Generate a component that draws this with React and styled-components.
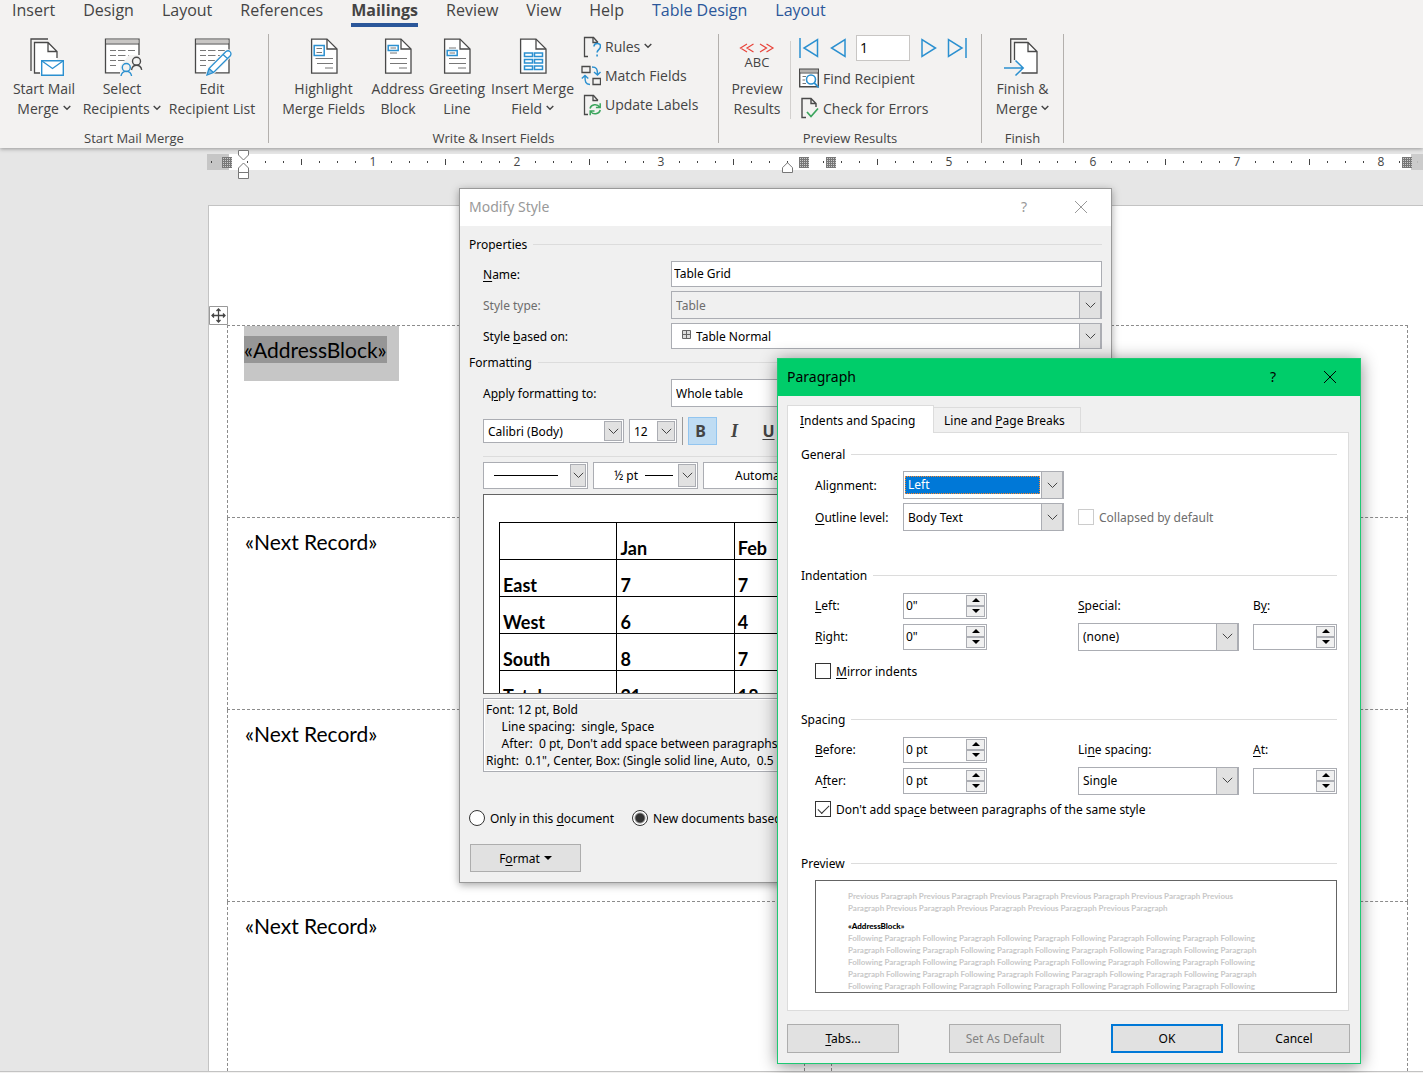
import React from 'react';
import styled, { createGlobalStyle, css } from 'styled-components';

const GlobalStyle = createGlobalStyle`
  * {
    box-sizing: border-box;
  }
  body {
    margin: 0;
    overflow: hidden;
    font-family: 'Open Sans', 'Noto Sans', sans-serif;
    font-size: 12px;
    color: #000;
  }
  button,
  input,
  select {
    font: inherit;
    color: inherit;
    margin: 0;
  }
  u {
    text-underline-offset: 2px;
  }
`;

const Screen = styled.div`
  display: flex;
  flex-direction: column;
  min-height: 100vh;
  background: #e6e6e6;
`;

/* ---------- ribbon ---------- */

const Ribbon = styled.header`
  background: #f3f2f1;
  color: #444;
  box-shadow: 0 1px 4px rgba(0, 0, 0, 0.35);
`;
const TabBar = styled.nav`
  display: flex;
  gap: 28px;
  padding-left: 12px;
`;
const RibbonTab = styled.a`
  font-size: 16px;
  line-height: 20px;
  padding-bottom: 3px;
  border-bottom: 4px solid ${(p) => (p.$active ? '#2b579a' : 'transparent')};
  font-weight: ${(p) => (p.$active ? 700 : 400)};
  color: ${(p) => (p.$context ? '#2b579a' : '#444')};
  text-decoration: none;
  white-space: nowrap;
`;
const Groups = styled.div`
  display: flex;
  height: 121px;
`;
const Group = styled.section`
  display: flex;
  flex-direction: column;
  justify-content: space-between;
  width: ${(p) => p.$width}px;
`;
const GroupBody = styled.div`
  display: flex;
  padding-left: ${(p) => p.$inset || 0}px;
`;
const GroupTitle = styled.div`
  font-size: 13px;
  line-height: 20px;
  text-align: center;
`;
const Separator = styled.div`
  width: 1px;
  margin: 7px 0 5px;
  background: #b3b0ad;
`;
const InnerSeparator = styled.div`
  width: 1px;
  margin: 14px 4px 4px 0;
  background: #d2d0ce;
`;
const BigButton = styled.button`
  display: flex;
  flex-direction: column;
  align-items: center;
  gap: 3px;
  width: ${(p) => p.$width}px;
  padding: 9px 0 0;
  border: 0;
  background: none;
  font-size: 14px;
  line-height: 20px;
  white-space: nowrap;
`;
const Stack = styled.div`
  display: flex;
  flex-direction: column;
  padding: 5px 0 0 4px;
`;
const SmallButton = styled.button`
  display: flex;
  align-items: center;
  gap: 4px;
  height: ${(p) => p.$height || 29}px;
  padding: 0;
  border: 0;
  background: none;
  font-size: 14px;
  white-space: nowrap;
`;
const NavRow = styled.div`
  display: flex;
  align-items: center;
  justify-content: space-between;
  width: 168px;
  height: 31px;
`;
const NavButton = styled.button`
  display: flex;
  padding: 0;
  border: 0;
  background: none;
`;
const RecordInput = styled.input`
  width: 54px;
  height: 26px;
  padding: 0 3px;
  border: 1px solid #c8c6c4;
  background: #fff;
  color: #000;
  font-size: 14px;
`;

/* ---------- document ---------- */

const RulerBar = styled.div`
  position: relative;
  display: flex;
  height: 16px;
  margin: 6px 0 35px 207px;
  background: linear-gradient(to right, #c6c6c6 22px, #fff 22px);
`;
const RulerSlots = styled.div`
  display: flex;
  flex: 1;
  margin-left: -5px;
  overflow: hidden;
`;
const Slot = styled.div`
  display: flex;
  flex: none;
  align-items: center;
  justify-content: center;
  width: 18px;
  font-size: 12px;
  line-height: 18px;
  color: #444;
`;
const Tick = styled.i`
  width: 1px;
  height: ${(p) => (p.$tall ? 6 : 2)}px;
  background: #444;
`;
const RulerMark = styled.svg`
  position: absolute;
  left: ${(p) => p.$x}px;
  top: ${(p) => p.$y}px;
`;
const RulerEnd = styled.div`
  position: absolute;
  left: 1204px;
  right: 0;
  height: 16px;
  background: #c6c6c6;
  opacity: 0.9;
`;
const Sheet = styled.main`
  position: relative;
  flex: 1;
  margin-left: 208px;
  padding: 119px 15px 0 18px;
  border: 1px solid #c3c3c3;
  border-width: 1px 0 0 1px;
  background: #fff;
`;
const WindowEdge = styled.div`
  height: 2px;
  border-top: 1px solid #c3c3c3;
  background: #f3f2f1;
`;
const Labels = styled.table`
  width: 100%;
  table-layout: fixed;
  border-collapse: collapse;
  font-family: Lato, 'Open Sans', sans-serif;
  font-size: 21px;
  line-height: 27px;
  td {
    height: 192px;
    padding: 0;
    border: 1px dashed #8c8c8c;
    vertical-align: top;
  }
  tr:last-child td {
    height: 169px;
    border-bottom: 0;
  }
`;
const MergeField = styled.div`
  padding: 10px 0 0 17px;
`;
const SelectedField = styled.div`
  width: 155px;
  height: 55px;
  margin-left: 16px;
  padding-top: 10px;
  background: #c6c6c6;
  span {
    display: inline-block;
    background: #969696;
  }
`;
const MoveHandle = styled.button`
  position: absolute;
  left: 0;
  top: 100px;
  display: flex;
  padding: 0;
  border: 0;
  background: none;
`;

/* ---------- windows ---------- */

const Window = styled.section`
  position: absolute;
  left: ${(p) => p.$x}px;
  top: ${(p) => p.$y}px;
  width: ${(p) => p.$width}px;
  border: 1px solid ${(p) => (p.$active ? '#1dc973' : '#999')};
  background: #f0f0f0;
  font-family: 'Noto Sans', 'Open Sans', sans-serif;
  box-shadow: ${(p) =>
    p.$active
      ? '0 2px 16px rgba(0, 0, 0, 0.45)'
      : '0 2px 8px rgba(0, 0, 0, 0.35)'};
`;
const TitleBar = styled.header`
  display: flex;
  align-items: center;
  height: 37px;
  padding: 0 22px 2px 9px;
  background: ${(p) => (p.$active ? '#00cd6a' : '#fff')};
  color: ${(p) => (p.$active ? '#000' : '#999')};
  font-size: 14px;
  h2 {
    flex: 1;
    margin: 0;
    font-size: inherit;
    font-weight: 400;
  }
`;
const TitleButton = styled.button`
  display: flex;
  align-items: center;
  justify-content: center;
  width: 16px;
  height: 24px;
  margin-left: 41px;
  padding: 0;
  border: 0;
  background: none;
`;
const Caption = styled.h3`
  display: flex;
  align-items: center;
  gap: 6px;
  height: 18px;
  margin: ${(p) => p.$top || 0}px 0 0;
  font-size: 12px;
  font-weight: 400;
  &::after {
    content: '';
    flex: 1;
    height: 1px;
    background: #dcdcdc;
  }
`;
const Combo = styled.div`
  display: flex;
  align-items: center;
  width: ${(p) => (p.$width ? `${p.$width}px` : '100%')};
  height: ${(p) => p.$height || 28}px;
  border: 1px solid #abadb3;
  background: ${(p) => (p.$disabled ? '#f0f0f0' : '#fff')};
  color: ${(p) => (p.$disabled ? '#6d6d6d' : '#000')};
  svg {
    flex: none;
  }
`;
const ComboSelect = styled.select`
  flex: 1;
  min-width: 0;
  height: 19px;
  margin: 0 1px;
  padding: 0 0 0 ${(p) => (p.$inset === undefined ? 3 : p.$inset)}px;
  border: 0;
  outline: 0;
  appearance: none;
  background: none;
  opacity: 1;
  line-height: 19px;
  ${(p) =>
    p.$focused &&
    css`
      height: 18px;
      line-height: 16px;
      padding-left: 2px;
      border: 1px dotted #ff8728;
      background: #0078d7;
      color: #fff;
    `}
`;
const ArrowCell = styled.span`
  display: flex;
  align-items: center;
  justify-content: center;
  align-self: stretch;
  width: ${(p) => (p.$small ? 18 : 22)}px;
  margin: ${(p) => (p.$small ? '1px 1px 1px 0' : '0')};
  border: 1px solid #abadb3;
  border-width: ${(p) => (p.$small ? '1px' : '0 1px 0 1px')};
  background: #e1e1e1;
  pointer-events: none;
`;
const PushButton = styled.button`
  width: 112px;
  height: 29px;
  padding: 0;
  border: ${(p) => (p.$primary ? '2px solid #0078d7' : '1px solid #adadad')};
  background: #e1e1e1;
  &:disabled {
    color: #838383;
  }
`;

/* modify style */

const StyleBody = styled.div`
  padding: 9px 9px 10px;
`;
const FieldRow = styled.div`
  display: grid;
  grid-template-columns: 188px 1fr;
  align-items: center;
  margin: ${(p) => p.$top || 4}px 0 0 14px;
  color: ${(p) => (p.$disabled ? '#6d6d6d' : '#000')};
`;
const NameInput = styled.input`
  width: 100%;
  height: 26px;
  padding: 0 2px 2px;
  border: 1px solid #abadb3;
  background: #fff;
`;
const ToolRow = styled.div`
  display: flex;
  align-items: center;
  gap: 5px;
  margin: ${(p) => p.$top}px 0 0 14px;
`;
const ToolSeparator = styled.div`
  width: 1px;
  height: 28px;
  background: #999;
`;
const FormatToggle = styled.button`
  width: 29px;
  height: 28px;
  padding: 0 4px 0 0;
  border: 1px solid ${(p) => (p.$on ? '#92c5f0' : 'transparent')};
  background: ${(p) => (p.$on ? '#bfdcf3' : 'none')};
  color: #444;
  font-size: 16px;
  font-weight: 700;
  i {
    font-family: 'Liberation Serif', serif;
    font-size: 18px;
  }
`;
const Rule = styled.div`
  height: 1px;
  margin: 11px 0 0 14px;
  background: #dcdcdc;
`;
const StrokeLine = styled.span`
  flex: none;
  width: ${(p) => p.$width}px;
  height: 1px;
  margin: 0 ${(p) => p.$gap}px;
  background: #000;
`;
const SampleBox = styled.div`
  height: 200px;
  margin: 5px 0 0 14px;
  padding: 27px 15px 0;
  border: 1px solid #646464;
  background: #fff;
  overflow: hidden;
`;
const SampleTable = styled.table`
  table-layout: fixed;
  width: 588px;
  border-collapse: collapse;
  font-family: Lato, 'Open Sans', sans-serif;
  font-size: 18px;
  line-height: 20px;
  th,
  td {
    height: 37px;
    padding: 0 3px 1px;
    border: 1px solid #000;
    font-weight: 700;
    text-align: left;
    vertical-align: bottom;
  }
`;
const Description = styled.div`
  height: 74px;
  margin: 4px 0 0 14px;
  padding: 2px;
  border: 1px solid #abadb3;
  box-shadow: inset 0 0 0 1px #fff;
  line-height: 17px;
  white-space: pre;
  overflow: hidden;
  p {
    margin: 0;
  }
`;
const RadioRow = styled.div`
  display: flex;
  gap: 18px;
  margin-top: 37px;
`;
const RadioLabel = styled.label`
  display: flex;
  align-items: center;
  gap: 5px;
  height: 18px;
`;
const Radio = styled.input`
  width: 16px;
  height: 16px;
  border: 1px solid #333;
  border-radius: 50%;
  appearance: none;
  background: #fff;
  &:checked {
    background: radial-gradient(circle, #333 4px, #fff 6px);
  }
`;
const FormatButton = styled(PushButton)`
  display: flex;
  align-items: center;
  justify-content: center;
  gap: 4px;
  width: 111px;
  height: 28px;
  margin: 17px 0 0 1px;
`;

/* paragraph */

const ParagraphBody = styled.div`
  padding: 9px 10px 10px 9px;
`;
const PageTabs = styled.div`
  display: flex;
  align-items: flex-end;
  height: 28px;
  margin-bottom: -1px;
`;
const PageTab = styled.button`
  position: relative;
  width: 147px;
  height: ${(p) => (p.$active ? 28 : 26)}px;
  padding: 1px 0 0 ${(p) => (p.$active ? 12 : 10)}px;
  border: 1px solid #dcdcdc;
  border-width: ${(p) => (p.$active ? '1px 1px 0' : '1px 1px 1px 0')};
  background: ${(p) => (p.$active ? '#fff' : '#f0f0f0')};
  text-align: left;
`;
const Panel = styled.div`
  margin-right: 1px;
  padding: 12px 11px 17px 13px;
  border: 1px solid #dcdcdc;
  background: #fff;
`;
const Fields = styled.div`
  display: grid;
  grid-template-columns: 88px 175px 175px 84px;
  grid-auto-rows: ${(p) => p.$row}px;
  align-items: center;
  margin: 6px 0 0 14px;
`;
const CheckLabel = styled.label`
  display: flex;
  align-items: center;
  gap: 5px;
  height: 18px;
  margin: ${(p) => p.$margin || '0'};
  color: ${(p) => (p.$disabled ? '#6d6d6d' : '#000')};
  white-space: nowrap;
`;
const Check = styled.input`
  display: grid;
  place-content: center;
  width: 16px;
  height: 16px;
  border: 1px solid ${(p) => (p.disabled ? '#ccc' : '#333')};
  appearance: none;
  background: #fff;
  &:checked::before {
    content: '';
    width: 10px;
    height: 5px;
    margin-top: -3px;
    border: solid #333;
    border-width: 0 0 1px 1px;
    transform: rotate(-45deg);
  }
`;
const SpinBox = styled.div`
  display: flex;
  width: 84px;
  height: 26px;
  padding: 1px;
  border: 1px solid #abadb3;
  background: #fff;
  input {
    flex: 1;
    min-width: 0;
    padding: 0 0 1px 1px;
    border: 0;
    background: none;
  }
`;
const SpinButtons = styled.div`
  display: flex;
  flex-direction: column;
  width: 19px;
  button {
    display: flex;
    flex: 1;
    align-items: center;
    justify-content: center;
    padding: 0;
    border: 1px solid #abadb3;
    background: #f0f0f0;
  }
`;
const TextPreview = styled.div`
  height: 113px;
  margin: 8px 0 0 14px;
  padding: 9px 32px 0;
  border: 1px solid #646464;
  font-family: Lato, 'Open Sans', sans-serif;
  font-size: 8px;
  font-weight: 700;
  line-height: 12px;
  color: #c8c8c8;
  white-space: pre;
  overflow: hidden;
  p {
    margin: 0;
  }
  strong {
    display: block;
    margin-top: 7px;
    line-height: 11px;
    color: #000;
  }
`;
const Footer = styled.footer`
  display: flex;
  justify-content: space-between;
  margin-top: 13px;
`;
const FooterPair = styled.div`
  display: flex;
  gap: ${(p) => p.$gap}px;
`;

/* ---------- icons ---------- */

const DARK = '#494949';
const BLUE = '#2b90d0';

const Icon = ({ children, w = 44, h = 40 }) => (
  <svg width={w} height={h} viewBox={`0 0 ${w} ${h}`} fill="none" stroke={DARK}>
    {children}
  </svg>
);
const Caret = () => (
  <svg width="8" height="10" viewBox="0 0 8 10" fill="none" stroke="#444" strokeWidth="1.4">
    <path d="M.7 2 4 5.3 7.3 2" />
  </svg>
);
const Chevron = () => (
  <svg width="11" height="7" viewBox="0 0 11 7" fill="none" stroke="#444">
    <path d="M.8.8 5.5 5.5 10.2.8" />
  </svg>
);
const Page = ({ children }) => (
  <Icon>
    <path d="M9.600 3.100H25l10 10v24H9.600z" fill="#fff" strokeWidth="1.3" />
    <path d="M25 3v10h10" strokeWidth="1.3" />
    {children}
  </Icon>
);
const MailIcon = () => (
  <Icon>
    <path d="M9 35V3h17" strokeWidth="1.3" />
    <path d="M18 37h-5.500V6.500H26l9 9V37z" fill="#fff" stroke="none" />
    <path d="M18 37h-5.500V6.500H26l9 9V22M26 6.500v9h9" strokeWidth="1.3" />
    <path d="M19.700 24.700h21.600v14.500H19.700z" fill="#fff" stroke={BLUE} strokeWidth="1.4" />
    <path d="m20 25 10.500 7.500L41 25" stroke={BLUE} strokeWidth="1.3" />
  </Icon>
);
const ListWindow = ({ children }) => (
  <Icon>
    <path d="M5.500 3.200h33.500v33.600H5.500z" fill="#fff" strokeWidth="1.3" />
    <path d="M6 3.600h32.500v4H6z" fill="#c8c6c4" stroke="none" />
    <path d="M5.500 8h33.500" />
    <path
      d="M10 14.500h6M18 14.500h7.500M28 14.500h7M10 19.500h6M18 19.500h7.500M28 19.500h7M10 24.500h6M18 24.500h7.500M10 29.500h6"
      stroke="#777"
    />
    {children}
  </Icon>
);
const RecipientsIcon = () => (
  <ListWindow>
    <path d="M20 40V30l9-11h15v21z" fill="#f3f2f1" stroke="none" />
    <circle cx="36.500" cy="25.300" r="4" strokeWidth="1.4" />
    <path d="M31.500 34c.6-3 2.500-4.700 5-4.700s4.600 1.700 5.200 4.500" strokeWidth="1.4" />
    <circle cx="26.300" cy="31.500" r="4" fill="#f3f2f1" stroke={BLUE} strokeWidth="1.4" />
    <path d="M21 40c.5-3 2.500-4.600 5.300-4.600s4.800 1.600 5.300 4.600" stroke={BLUE} strokeWidth="1.4" />
  </ListWindow>
);
const EditListIcon = () => (
  <ListWindow>
    <path
      d="m17 39 2-6.500 17-17c3-2 6 1 4.500 4L23.500 36.500z"
      fill="#fff"
      stroke="#f3f2f1"
      strokeWidth="3"
    />
    <path
      d="m17 39 2-6.500 17-17c3-2 6 1 4.500 4L23.500 36.500zM33 18.500l4.500 4M19 32.500l4.500 4"
      fill="#fff"
      stroke={BLUE}
      strokeWidth="1.3"
    />
    <path d="m17 39 2-6.500 4.500 4z" fill={BLUE} stroke="none" fillOpacity=".6" />
  </ListWindow>
);
const HighlightIcon = () => (
  <Page>
    <path d="M13.500 22.500h17.500M15 27.500h16M23 32h8" stroke="#777" />
    <path d="M12.200 9.500h10v10h-10z" stroke={BLUE} strokeWidth="1.5" />
    <path d="M14.500 12.500H20M14.500 16.500H20" stroke="#777" />
  </Page>
);
const AddressIcon = () => (
  <Page>
    <path d="M14 17h7M14 22.500h17M14 27.500h17M23 32h8" stroke="#777" />
    <path d="M12.200 9.500h10v5h-10z" stroke={BLUE} strokeWidth="1.5" />
    <path d="M14.500 12H20" stroke="#777" />
  </Page>
);
const GreetingIcon = () => (
  <Page>
    <path d="M14 12h7M14 22.500h17M14 27.500h17M23 32h8" stroke="#777" />
    <path d="M12.200 14.500h10v5h-10z" stroke={BLUE} strokeWidth="1.5" />
    <path d="M14.500 17H20" stroke="#777" />
  </Page>
);
const InsertFieldIcon = () => (
  <Page>
    <path
      d="M13.500 17h8v3.500h-8zM23.500 17h8v3.500h-8zM13.500 23.500h8V27h-8zM23.500 23.500h8V27h-8zM13.500 30h8v3.500h-8zM23.500 30h8v3.500h-8z"
      stroke={BLUE}
      strokeWidth="1.5"
    />
  </Page>
);
const PreviewIcon = () => (
  <svg width="44" height="40" viewBox="0 0 44 40">
    <path
      d="m12 8-6.500 4L12 16m6.500-8L12 12l6.500 4M25 8l6.500 4-6.500 4m6.500-8 6.500 4-6.500 4"
      fill="none"
      stroke="#e8453c"
      strokeWidth="1.2"
    />
    <text x="22" y="31" textAnchor="middle" fontSize="13" fill="#444">
      ABC
    </text>
  </svg>
);
const FinishIcon = () => (
  <Icon>
    <path d="M9.700 27V3H26" strokeWidth="1.3" />
    <path d="M13.500 24V6.500H27l9 9V37H20.500V28z" fill="#fff" stroke="none" />
    <path d="M13.500 24V6.500H27l9 9V37H20.500M27 6.500v9h9" strokeWidth="1.3" />
    <path d="M3 32h19M14.500 24.500l7.700 7.500-7.700 7.500" stroke={BLUE} strokeWidth="1.5" />
  </Icon>
);
const SmallPage = ({ children }) => (
  <svg width="20" height="22" viewBox="-1 0 20 22" fill="none" stroke={DARK}>
    <path d="M6 20.500H2.500V1.500h9L16 6.500" strokeWidth="1.3" />
    <path d="M11 1.500V6.500h5" strokeWidth="1.3" />
    {children}
  </svg>
);
const RulesIcon = () => (
  <SmallPage>
    <path
      d="M12 10.500c0-4 6.500-4 6.500-.3s-3.400 3-3.400 6.300M15.100 18.500v2"
      stroke={BLUE}
      strokeWidth="1.6"
    />
  </SmallPage>
);
const MatchIcon = () => (
  <Icon w={20} h={22}>
    <path d="M1 1.500h8v6H1zM12 13.500h7.500v6H12z" strokeWidth="1.3" />
    <path d="M11 2c4.500 0 5.500 2 5.500 7.500M13 7l3.500 3L19.500 7" stroke={BLUE} strokeWidth="1.4" />
    <path d="M9 19.500c-4.500-.5-5-2.500-5-8M.8 13.500 4 10.500l3.300 3" stroke={BLUE} strokeWidth="1.4" />
  </Icon>
);
const UpdateIcon = () => (
  <SmallPage>
    <path
      d="M8 14.500c1.200-4.500 7.500-5 9.500-1.500M18.200 9.200v4.300h-4.300M18.300 16c-1.200 4.500-7.500 5-9.500 1.500M8.200 21.300v-4.300h4.300"
      stroke="#3ba55d"
      strokeWidth="1.5"
    />
  </SmallPage>
);
const FindIcon = () => (
  <Icon w={20} h={20}>
    <path d="M.7 1.200h18.600v17.600H.7z" fill="#fff" strokeWidth="1.4" />
    <path d="M1 1.500h18v3H1z" fill="#b5b3b1" stroke="none" />
    <path d="M1 5h18" />
    <path d="M3.500 8.500H7M3.500 12H6M3.500 15.500H7" stroke="#777" />
    <circle cx="12" cy="11.500" r="4.500" fill="#fff" stroke={BLUE} strokeWidth="1.6" />
    <path d="m15.200 14.800 4.500 4.700" stroke={BLUE} strokeWidth="1.7" />
  </Icon>
);
const CheckIcon = () => (
  <Icon w={20} h={22}>
    <path d="M7 20.500H3v-19h9l5 5V10M12 1.500v5h5" strokeWidth="1.4" />
    <path d="m8 15 4 4.500 7-8" stroke="#3ba55d" strokeWidth="1.7" />
  </Icon>
);
const NavArrow = ({ d, w }) => (
  <svg width={w} height="20" viewBox={`0 0 ${w} 20`} fill="none" stroke={BLUE} strokeWidth="1.5">
    <path d={d} />
  </svg>
);
const Close = () => (
  <svg width="14" height="14" viewBox="0 0 14 14" fill="none" stroke="currentColor">
    <path d="m1 1 12 12M13 1 1 13" />
  </svg>
);
const Triangle = ({ up }) => (
  <svg width="8" height="4" viewBox="0 0 8 4">
    <path d={up ? 'M4 0 8 4H0z' : 'M4 4 0 0h8z'} />
  </svg>
);
const GridMark = ({ x }) => (
  <RulerMark $x={x} $y={3} width="10" height="11" viewBox="0 0 10 11" stroke="#777">
    <path fill="#ccc" stroke="none" d="M0 0h10v11H0z" />
    <path d="M.5 0v11M2.500 0v11M4.500 0v11M6.500 0v11M8.500 0v11M0 .5h10M0 2.500h10M0 4.500h10M0 6.500h10M0 8.500h10M0 10.500h10" />
  </RulerMark>
);

/* ---------- parts ---------- */

const tabs = [
  'Insert',
  'Design',
  'Layout',
  'References',
  'Mailings',
  'Review',
  'View',
  'Help',
];
const rulerSlots = Array.from({ length: 69 }, (_, i) => i - 1);

// the gutter between the label columns hides the number at inch 4
function RulerSlot({ n }) {
  if (n > 0 && n % 8 === 0) {
    return <Slot>{n === 32 ? '' : n / 8}</Slot>;
  }
  return <Slot>{n !== 0 && <Tick $tall={n % 8 === 4} />}</Slot>;
}

function Dropdown({ id, label, value, width, height, disabled, focused, small, inset, lead, tail }) {
  return (
    <Combo $width={width} $height={height} $disabled={disabled}>
      {lead}
      <ComboSelect
        id={id}
        aria-label={label}
        disabled={disabled}
        $focused={focused}
        $inset={inset}
      >
        <option>{value}</option>
      </ComboSelect>
      {tail}
      <ArrowCell $small={small}>
        <Chevron />
      </ArrowCell>
    </Combo>
  );
}

function Spinner({ id, value }) {
  return (
    <SpinBox>
      <input id={id} type="text" defaultValue={value} />
      <SpinButtons>
        <button type="button" aria-label="Increase">
          <Triangle up />
        </button>
        <button type="button" aria-label="Decrease">
          <Triangle />
        </button>
      </SpinButtons>
    </SpinBox>
  );
}

function MailingsRibbon() {
  return (
    <Ribbon>
      <TabBar>
        {tabs.map((tab) => (
          <RibbonTab key={tab} href="#" $active={tab === 'Mailings'}>
            {tab}
          </RibbonTab>
        ))}
        <RibbonTab href="#" $context>
          Table Design
        </RibbonTab>
        <RibbonTab href="#" $context>
          Layout
        </RibbonTab>
      </TabBar>
      <Groups>
        <Group $width={268}>
          <GroupBody $inset={8}>
            <BigButton $width={72}>
              <MailIcon />
              <span>
                Start Mail
                <br />
                Merge <Caret />
              </span>
            </BigButton>
            <BigButton $width={84}>
              <RecipientsIcon />
              <span>
                Select
                <br />
                Recipients <Caret />
              </span>
            </BigButton>
            <BigButton $width={96}>
              <EditListIcon />
              <span>
                Edit
                <br />
                Recipient List
              </span>
            </BigButton>
          </GroupBody>
          <GroupTitle>Start Mail Merge</GroupTitle>
        </Group>
        <Separator />
        <Group $width={449}>
          <GroupBody $inset={8}>
            <BigButton $width={93}>
              <HighlightIcon />
              <span>
                Highlight
                <br />
                Merge Fields
              </span>
            </BigButton>
            <BigButton $width={56}>
              <AddressIcon />
              <span>
                Address
                <br />
                Block
              </span>
            </BigButton>
            <BigButton $width={62}>
              <GreetingIcon />
              <span>
                Greeting
                <br />
                Line
              </span>
            </BigButton>
            <BigButton $width={89}>
              <InsertFieldIcon />
              <span>
                Insert Merge
                <br />
                Field <Caret />
              </span>
            </BigButton>
            <Stack>
              <SmallButton>
                <RulesIcon />
                <span>
                  Rules <Caret />
                </span>
              </SmallButton>
              <SmallButton>
                <MatchIcon />
                Match Fields
              </SmallButton>
              <SmallButton>
                <UpdateIcon />
                Update Labels
              </SmallButton>
            </Stack>
          </GroupBody>
          <GroupTitle>Write &amp; Insert Fields</GroupTitle>
        </Group>
        <Separator />
        <Group $width={262}>
          <GroupBody $inset={5}>
            <BigButton $width={66}>
              <PreviewIcon />
              <span>
                Preview
                <br />
                Results
              </span>
            </BigButton>
            <InnerSeparator />
            <Stack>
              <NavRow>
                <NavButton aria-label="First record">
                  <NavArrow w={20} d="M1 0v20M18.500 1.500v17L5 10z" />
                </NavButton>
                <NavButton aria-label="Previous record">
                  <NavArrow w={16} d="M15 1.500v17L1.500 10z" />
                </NavButton>
                <RecordInput aria-label="Record" defaultValue="1" />
                <NavButton aria-label="Next record">
                  <NavArrow w={16} d="M1 1.500v17L14.500 10z" />
                </NavButton>
                <NavButton aria-label="Last record">
                  <NavArrow w={20} d="M19 0v20M1.500 1.500v17L15 10z" />
                </NavButton>
              </NavRow>
              <SmallButton $height={30}>
                <FindIcon />
                Find Recipient
              </SmallButton>
              <SmallButton $height={30}>
                <CheckIcon />
                Check for Errors
              </SmallButton>
            </Stack>
          </GroupBody>
          <GroupTitle>Preview Results</GroupTitle>
        </Group>
        <Separator />
        <Group $width={81}>
          <GroupBody>
            <BigButton $width={81}>
              <FinishIcon />
              <span>
                Finish &amp;
                <br />
                Merge <Caret />
              </span>
            </BigButton>
          </GroupBody>
          <GroupTitle>Finish</GroupTitle>
        </Group>
        <Separator />
      </Groups>
    </Ribbon>
  );
}

function Ruler() {
  return (
    <RulerBar>
      <RulerSlots>
        {rulerSlots.map((n) => (
          <RulerSlot key={n} n={n} />
        ))}
      </RulerSlots>
      <RulerEnd />
      <GridMark x={15} />
      <GridMark x={592} />
      <GridMark x={619} />
      <GridMark x={1195} />
      <RulerMark $x={31} $y={-4} width="11" height="30" viewBox="0 0 11 30" fill="#fff" stroke="#777">
        <path d="M.5.5h10V5l-5 5-5-5zM5.500 13l5 5v4.500H.5V18zM.5 22.500h10v6H.5z" />
      </RulerMark>
      <RulerMark $x={575} $y={8} width="11" height="11" viewBox="0 0 11 11" fill="#fff" stroke="#777">
        <path d="m5.500.7 5 5v4.800H.5V5.700z" />
      </RulerMark>
    </RulerBar>
  );
}

function LabelSheet() {
  return (
    <Sheet>
      <MoveHandle aria-label="Move table">
        <svg width="19" height="19" viewBox="0 0 19 19" fill="#fff" stroke="#999">
          <path d="M.5.5h18v18H.5z" />
          <path
            d="M9.500 3v13M3 9.500h13M7.500 5l2-2 2 2M7.500 14l2 2 2-2M5 7.500l-2 2 2 2M14 7.500l2 2-2 2"
            fill="none"
            stroke="#444"
            strokeWidth="1.3"
          />
        </svg>
      </MoveHandle>
      <Labels>
        <colgroup>
          <col width="577" />
          <col width="27" />
          <col />
        </colgroup>
        <tbody>
          <tr>
            <td>
              <SelectedField>
                <span>«AddressBlock»</span>
              </SelectedField>
            </td>
            <td />
            <td />
          </tr>
          {[1, 2, 3].map((row) => (
            <tr key={row}>
              <td>
                <MergeField>«Next Record»</MergeField>
              </td>
              <td />
              <td />
            </tr>
          ))}
        </tbody>
      </Labels>
    </Sheet>
  );
}

const sampleRows = [
  ['East', 7, 7, 5, 19],
  ['West', 6, 4, 7, 17],
  ['South', 8, 7, 9, 24],
  ['Total', 21, 18, 21, 60],
];

function ModifyStyle() {
  return (
    <Window $x={459} $y={188} $width={653}>
      <TitleBar>
        <h2>Modify Style</h2>
        <TitleButton aria-label="Help">?</TitleButton>
        <TitleButton aria-label="Close">
          <Close />
        </TitleButton>
      </TitleBar>
      <StyleBody>
        <Caption>Properties</Caption>
        <FieldRow $top={8}>
          <label htmlFor="style-name">
            <u>N</u>ame:
          </label>
          <NameInput id="style-name" defaultValue="Table Grid" />
        </FieldRow>
        <FieldRow $disabled>
          <label htmlFor="style-type">Style type:</label>
          <Dropdown id="style-type" value="Table" disabled />
        </FieldRow>
        <FieldRow>
          <label htmlFor="style-base">
            Style <u>b</u>ased on:
          </label>
          <Dropdown
            id="style-base"
            value="Table Normal"
            height={26}
            lead={
              <svg width="20" height="12" viewBox="0 0 20 12" fill="#ddd" stroke="#666">
                <path d="M10.500.5h8v8h-8zM14.500.5v8M10.500 4.500h8" />
              </svg>
            }
          />
        </FieldRow>
        <Caption $top={4}>Formatting</Caption>
        <FieldRow $top={8}>
          <label htmlFor="apply-to">
            A<u>p</u>ply formatting to:
          </label>
          <Dropdown id="apply-to" value="Whole table" />
        </FieldRow>
        <ToolRow $top={10}>
          <Dropdown label="Font" value="Calibri (Body)" width={141} height={24} small />
          <Dropdown label="Font size" value="12" width={48} height={24} small />
          <ToolSeparator />
          <FormatToggle aria-label="Bold" $on>
            B
          </FormatToggle>
          <FormatToggle aria-label="Italic">
            <i>I</i>
          </FormatToggle>
          <FormatToggle aria-label="Underline">
            <u>U</u>
          </FormatToggle>
        </ToolRow>
        <Rule />
        <ToolRow $top={5}>
          <Dropdown
            label="Line style"
            value=""
            width={105}
            height={27}
            small
            inset={0}
            lead={<StrokeLine $width={64} $gap={10} />}
          />
          <Dropdown
            label="Line weight"
            value="½ pt"
            width={105}
            height={27}
            small
            inset={19}
            tail={<StrokeLine $width={28} $gap={5} />}
          />
          <Dropdown label="Line color" value="Automatic" width={140} height={27} small inset={30} />
        </ToolRow>
        <SampleBox>
          <SampleTable>
            <thead>
              <tr>
                <th />
                <th>Jan</th>
                <th>Feb</th>
                <th>Mar</th>
                <th>Total</th>
              </tr>
            </thead>
            <tbody>
              {sampleRows.map((row) => (
                <tr key={row[0]}>
                  {row.map((cell, i) => (
                    <td key={i}>{cell}</td>
                  ))}
                </tr>
              ))}
            </tbody>
          </SampleTable>
        </SampleBox>
        <Description>
          <p>Font: 12 pt, Bold</p>
          <p>{'     Line spacing:  single, Space'}</p>
          <p>{"     After:  0 pt, Don't add space between paragraphs"}</p>
          <p>{'Right:  0.1", Center, Box: (Single solid line, Auto,  0.5 pt'}</p>
        </Description>
        <RadioRow>
          <RadioLabel>
            <Radio type="radio" name="scope" />
            <span>
              Only in this <u>d</u>ocument
            </span>
          </RadioLabel>
          <RadioLabel>
            <Radio type="radio" name="scope" defaultChecked />
            New documents based on this template
          </RadioLabel>
        </RadioRow>
        <FormatButton>
          <span>
            F<u>o</u>rmat
          </span>
          <Triangle />
        </FormatButton>
      </StyleBody>
    </Window>
  );
}

const previous = [
  'Previous Paragraph Previous Paragraph Previous Paragraph Previous Paragraph Previous Paragraph Previous',
  'Paragraph Previous Paragraph Previous Paragraph Previous Paragraph Previous Paragraph',
];
const followingA =
  'Following Paragraph Following Paragraph Following Paragraph Following Paragraph Following Paragraph Following';
const followingB =
  'Paragraph Following Paragraph Following Paragraph Following Paragraph Following Paragraph Following Paragraph';

function ParagraphDialog() {
  return (
    <Window $x={777} $y={358} $width={584} $active>
      <TitleBar $active>
        <h2>Paragraph</h2>
        <TitleButton aria-label="Help">?</TitleButton>
        <TitleButton aria-label="Close">
          <Close />
        </TitleButton>
      </TitleBar>
      <ParagraphBody>
        <PageTabs>
          <PageTab $active>
            <u>I</u>ndents and Spacing
          </PageTab>
          <PageTab>
            Line and <u>P</u>age Breaks
          </PageTab>
        </PageTabs>
        <Panel>
          <Caption>General</Caption>
          <Fields $row={32}>
            <label htmlFor="alignment">
              Ali<u>g</u>nment:
            </label>
            <Dropdown id="alignment" value="Left" width={161} focused />
            <span />
            <span />
            <label htmlFor="outline">
              <u>O</u>utline level:
            </label>
            <Dropdown id="outline" value="Body Text" width={161} />
            <CheckLabel $disabled>
              <Check type="checkbox" disabled />
              Collapsed by default
            </CheckLabel>
          </Fields>
          <Caption $top={33}>Indentation</Caption>
          <Fields $row={31}>
            <label htmlFor="indent-left">
              <u>L</u>eft:
            </label>
            <Spinner id="indent-left" value={'0"'} />
            <label htmlFor="special">
              <u>S</u>pecial:
            </label>
            <label htmlFor="indent-by">
              B<u>y</u>:
            </label>
            <label htmlFor="indent-right">
              <u>R</u>ight:
            </label>
            <Spinner id="indent-right" value={'0"'} />
            <Dropdown id="special" value="(none)" width={161} />
            <Spinner id="indent-by" value="" />
          </Fields>
          <CheckLabel $margin="10px 0 0 14px">
            <Check type="checkbox" />
            <span>
              <u>M</u>irror indents
            </span>
          </CheckLabel>
          <Caption $top={30}>Spacing</Caption>
          <Fields $row={31}>
            <label htmlFor="before">
              <u>B</u>efore:
            </label>
            <Spinner id="before" value="0 pt" />
            <label htmlFor="line-spacing">
              Li<u>n</u>e spacing:
            </label>
            <label htmlFor="spacing-at">
              <u>A</u>t:
            </label>
            <label htmlFor="after">
              A<u>f</u>ter:
            </label>
            <Spinner id="after" value="0 pt" />
            <Dropdown id="line-spacing" value="Single" width={161} />
            <Spinner id="spacing-at" value="" />
          </Fields>
          <CheckLabel $margin="4px 0 0 14px">
            <Check type="checkbox" defaultChecked />
            <span>
              Don't add spa<u>c</u>e between paragraphs of the same style
            </span>
          </CheckLabel>
          <Caption $top={36}>Preview</Caption>
          <TextPreview>
            {previous.map((line) => (
              <p key={line}>{line}</p>
            ))}
            <strong>«AddressBlock»</strong>
            <p>{followingA}</p>
            <p>{followingB}</p>
            <p>{followingA}</p>
            <p>{followingB}</p>
            <p>{followingA}</p>
          </TextPreview>
        </Panel>
        <Footer>
          <FooterPair $gap={50}>
            <PushButton>
              <u>T</u>abs...
            </PushButton>
            <PushButton disabled>Set As Default</PushButton>
          </FooterPair>
          <FooterPair $gap={15}>
            <PushButton $primary>OK</PushButton>
            <PushButton>Cancel</PushButton>
          </FooterPair>
        </Footer>
      </ParagraphBody>
    </Window>
  );
}

function App() {
  return (
    <Screen>
      <GlobalStyle />
      <MailingsRibbon />
      <Ruler />
      <LabelSheet />
      <WindowEdge />
      <ModifyStyle />
      <ParagraphDialog />
    </Screen>
  );
}

export default App;
